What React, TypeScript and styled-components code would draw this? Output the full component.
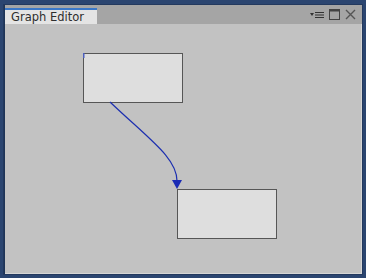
import styled, { createGlobalStyle } from 'styled-components';

const GlobalStyle = createGlobalStyle`
  html, body {
    margin: 0;
    padding: 0;
    background: #2b4570;
  }
`;

const Desktop = styled.div`
  width: 366px;
  height: 278px;
  box-sizing: border-box;
  padding: 5px 4px 4px 4px;
  display: flex;
`;

const Window = styled.div`
  flex: 1;
  display: flex;
  flex-direction: column;
  background: #a5a5a5;
  border-left: 1px solid #1e3457;
  box-shadow: 0 0 0 1px #23395e;
`;

const TitleBar = styled.div`
  height: 19px;
  display: flex;
  justify-content: space-between;
`;

const Tab = styled.div`
  width: 92px;
  height: 16px;
  box-sizing: border-box;
  margin-top: 3px;
  border-top: 2px solid #3b78c8;
  background: #e4e4e4;
  font-family: 'DejaVu Sans', sans-serif;
  font-size: 11.5px;
  line-height: 14px;
  color: #2e2e2e;
  padding-left: 6px;
`;

const Controls = styled.div`
  display: flex;
  align-items: center;
  gap: 5px;
  padding-right: 6px;
`;

const Canvas = styled.div`
  position: relative;
  flex: 1;
  background: #c2c2c2;
  border-right: 1px solid #d6d6d6;
  border-bottom: 1px solid #d6d6d6;
  overflow: hidden;
`;

const Node = styled.div<{ $x: number; $y: number }>`
  position: absolute;
  left: ${(p) => p.$x}px;
  top: ${(p) => p.$y}px;
  width: 100px;
  height: 50px;
  box-sizing: border-box;
  background: #dedede;
  border: 1px solid #565656;
`;

const Edges = styled.svg`
  position: absolute;
  left: 0;
  top: 0;
  width: 100%;
  height: 100%;
  pointer-events: none;
`;

// canvas origin on the page
const OX = 5;
const OY = 24;

export default function App() {
  return (
    <>
      <GlobalStyle />
      <Desktop>
        <Window>
          <TitleBar>
            <Tab>Graph Editor</Tab>
            <Controls>
              <svg width="14" height="8" viewBox="0 0 14 8">
                <path d="M0 2 H4 L2 5 Z" fill="#333" />
                <path d="M5 1.5 H14 M5 4 H14 M5 6.5 H14" stroke="#333" strokeWidth="1.2" />
              </svg>
              <svg width="11" height="11" viewBox="0 0 11 11">
                <rect x="0.5" y="0.5" width="10" height="10" fill="none" stroke="#444" />
                <rect x="0.5" y="0.5" width="10" height="2" fill="#444" />
              </svg>
              <svg width="11" height="11" viewBox="0 0 11 11">
                <path d="M1 1 L10 10 M10 1 L1 10" stroke="#555" strokeWidth="1.4" />
              </svg>
            </Controls>
          </TitleBar>
          <Canvas>
            <Node $x={83 - OX} $y={53 - OY} />
            <Node $x={177 - OX} $y={189 - OY} />
            <Edges>
              <path
                d={`M${110 - OX} ${102 - OY} C${150 - OX} ${140 - OY} ${177 - OX} ${158 - OY} ${177 - OX} ${181 - OY}`}
                fill="none"
                stroke="#1c2fb0"
                strokeWidth="1.2"
              />
              <path
                d={`M${172 - OX} ${180 - OY} H${182 - OX} L${177 - OX} ${189 - OY} Z`}
                fill="#1a2bb5"
              />
              <rect x={83 - OX} y={53 - OY} width="1.5" height="5" fill="#4c5fc0" />
            </Edges>
          </Canvas>
        </Window>
      </Desktop>
    </>
  );
}
